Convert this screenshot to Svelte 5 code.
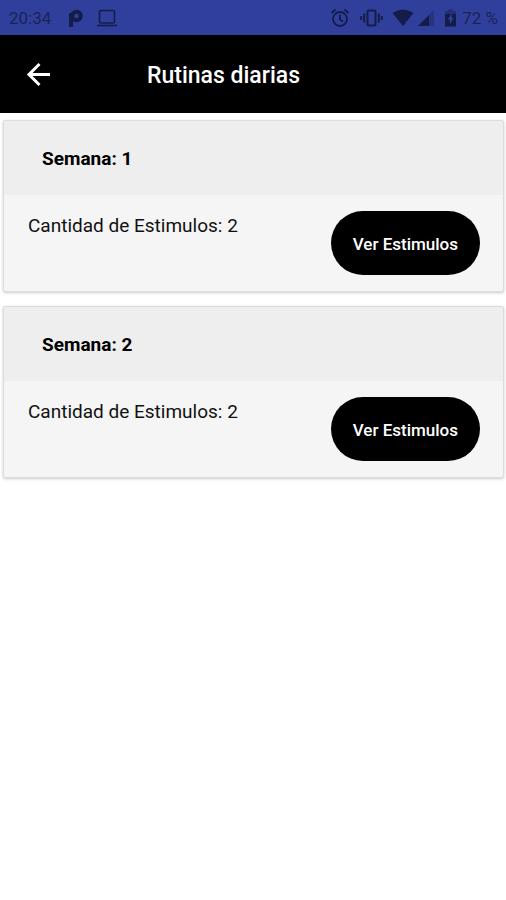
<script>
    let routines = [
        { week: 1, stimuli: 2 },
        { week: 2, stimuli: 2 },
    ];
</script>

<style>
    :global(body) {
        margin: 0;
        background: #fff;
        color: #111;
        font-family: Roboto, "Liberation Sans", sans-serif;
    }
    .status {
        display: flex;
        align-items: center;
        justify-content: space-between;
        height: 35px;
        padding: 0 8px 0 9px;
        background: #303f9b;
        color: #1a2357;
        font-size: 17px;
        line-height: 20px;
    }
    .group {
        display: flex;
        align-items: center;
    }
    .group svg {
        display: block;
        color: #141c4a;
    }
    .left {
        gap: 13px;
    }
    .right {
        gap: 4px;
    }
    .bar {
        display: grid;
        grid-template-columns: 104px 1fr;
        align-items: center;
        height: 78px;
        padding: 0 24px 0 23px;
        background: #000;
        color: #fff;
    }
    .back {
        width: 32px;
        height: 32px;
        padding: 0;
        border: 0;
        background: none;
        color: #fff;
        cursor: pointer;
    }
    .back svg {
        display: block;
    }
    h1 {
        margin: 0 0 0 20px;
        padding-top: 3px;
        font-size: 23px;
        font-weight: 500;
        line-height: 28px;
    }
    main {
        display: flex;
        flex-direction: column;
        gap: 14px;
        padding: 7px 2px 7px 3px;
    }
    .card {
        box-sizing: border-box;
        border: 1px solid #dcdcdc;
        border-radius: 2px;
        background: #f5f5f5;
        box-shadow: 0 1px 3px rgb(0, 0, 0, 0.2);
    }
    h2 {
        margin: 0;
        padding: 25px 38px 24px;
        background: #eee;
        color: #000;
        font-size: 19px;
        font-weight: 700;
        line-height: 25px;
    }
    .body {
        display: flex;
        align-items: flex-start;
        justify-content: space-between;
        padding: 16px 23px 16px 24px;
    }
    p {
        margin: 3px 0 0;
        font-size: 19px;
        line-height: 24px;
    }
    .view {
        height: 64px;
        padding: 2px 22px 0;
        border: 0;
        border-radius: 32px;
        background: #000;
        color: #fff;
        font-family: inherit;
        font-size: 17px;
        font-weight: 500;
        line-height: 24px;
        cursor: pointer;
    }
</style>

<div class="status">
    <div class="group left">
        <span>20:34</span>
        <svg width="20" height="20" viewBox="0 0 20 20" fill="none" stroke="currentColor" stroke-width="4">
            <circle cx="12.500" cy="8" r="4.200" />
            <path d="M7 5V19" />
        </svg>
        <svg width="20" height="20" viewBox="0 0 20 20" fill="none" stroke="currentColor" stroke-width="1.6">
            <rect x="2.500" y="2.500" width="15" height="12.500" rx="1.500" />
            <path d="M0 17.500H20" />
        </svg>
    </div>
    <div class="group right">
        <svg width="26" height="20" viewBox="0 0 26 20" fill="none" stroke="currentColor" stroke-width="1.8">
            <circle cx="10" cy="11" r="7" />
            <path d="M10 6.500V11.500L13 13.500M1.500 5L5.500 1.500M18.500 5L14.500 1.500" />
        </svg>
        <svg width="28" height="20" viewBox="0 0 28 20" fill="none" stroke="currentColor" stroke-width="2">
            <rect x="7.500" y="2.500" width="8" height="15" rx="1" />
            <path d="M4.200 5.500V14.500M18.800 5.500V14.500M1.200 8V12M21.800 8V12" />
        </svg>
        <svg width="22" height="20" viewBox="0 0 22 20" fill="currentColor">
            <path d="M0.500 5Q11 -2 21.500 5L11 18Z" />
        </svg>
        <svg width="18" height="20" viewBox="0 0 18 20" fill="currentColor">
            <path d="M0 18L16 2V18Z" opacity="0.35" />
            <path d="M0 18L11 7V18Z" />
        </svg>
        <svg width="18" height="20" viewBox="0 0 18 20">
            <path d="M8 1H13V3H16V7H5V3H8Z" fill="currentColor" opacity="0.4" />
            <path d="M5 6H16V18.500H5Z" fill="currentColor" />
            <path d="M11.500 5L8 11.500H10V16.500L13.500 9.800H11.500Z" fill="#303f9b" />
        </svg>
        <span>72 %</span>
    </div>
</div>

<header class="bar">
    <button class="back" aria-label="Volver">
        <svg width="32" height="32" viewBox="0 0 32 32" fill="none" stroke="currentColor" stroke-width="3">
            <path d="M27 16.500H7M16.500 6L6 16.500L16.500 27" />
        </svg>
    </button>
    <h1>Rutinas diarias</h1>
</header>

<main>
    {#each routines as routine (routine.week)}
        <section class="card">
            <h2>Semana: {routine.week}</h2>
            <div class="body">
                <p>Cantidad de Estimulos: {routine.stimuli}</p>
                <button class="view">Ver Estimulos</button>
            </div>
        </section>
    {/each}
</main>
